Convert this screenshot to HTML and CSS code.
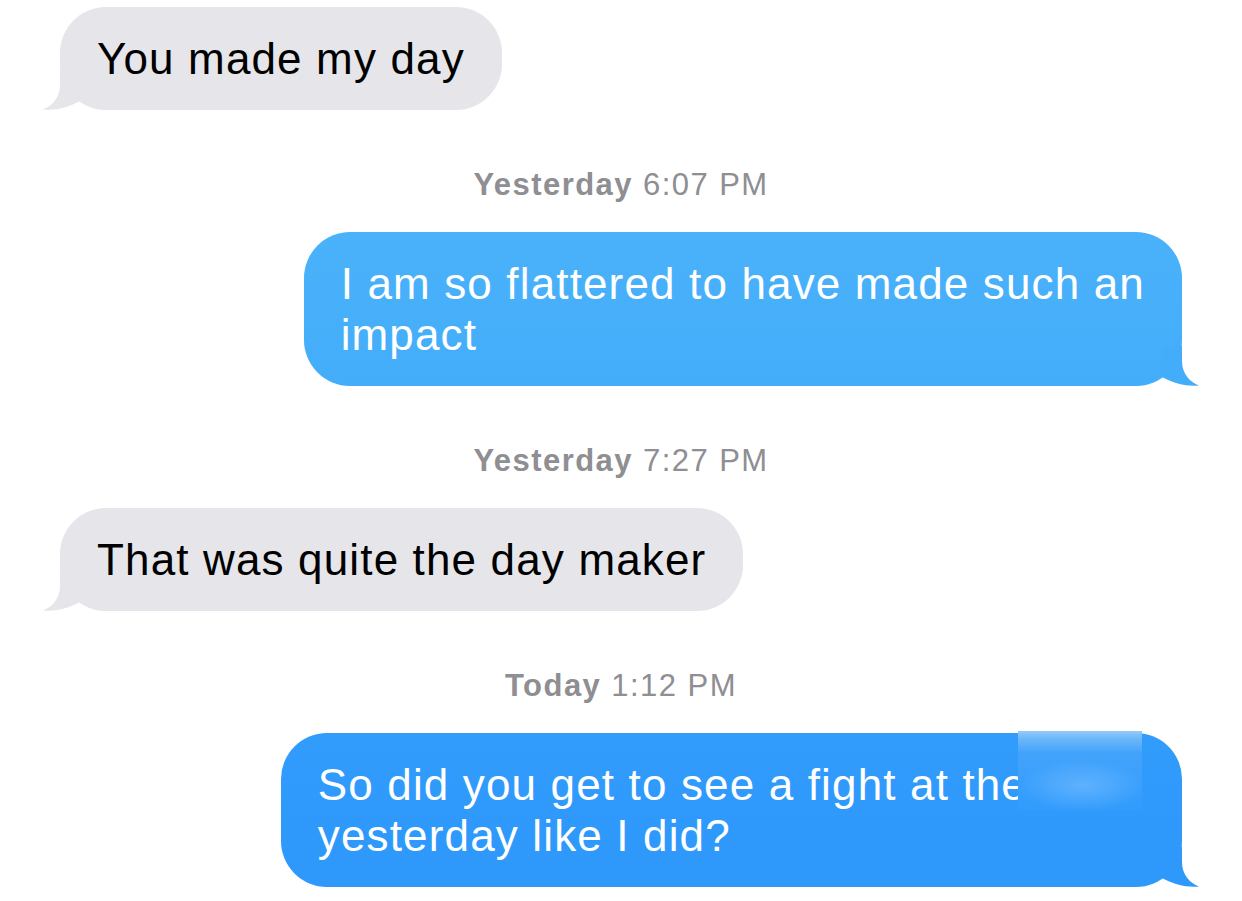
FILE: index.html
```html
<!DOCTYPE html>
<html lang="en">
<head>
<meta charset="utf-8">
<title>Messages</title>
<link rel="stylesheet" href="styles.css">
</head>
<body>
<main class="thread">
  <div class="bubble them">You made my day<svg class="tail tail-left" viewBox="0 0 50 40" width="50" height="40"><path d="M20 0 L20 15 C20 28 12 36 3 39.5 C16 40.5 28 37.5 40 31 L40 0 Z"/></svg></div>

  <div class="stamp"><b>Yesterday</b> 6:07 PM</div>

  <div class="bubble me light">I am so flattered to have made such an<br>impact<svg class="tail tail-right" viewBox="0 0 50 40" width="50" height="40"><path d="M30 0 L30 15 C30 28 38 36 47 39.5 C34 40.5 22 37.5 10 31 L10 0 Z"/></svg></div>

  <div class="stamp"><b>Yesterday</b> 7:27 PM</div>

  <div class="bubble them">That was quite the day maker<svg class="tail tail-left" viewBox="0 0 50 40" width="50" height="40"><path d="M20 0 L20 15 C20 28 12 36 3 39.5 C16 40.5 28 37.5 40 31 L40 0 Z"/></svg></div>

  <div class="stamp"><b>Today</b> 1:12 PM</div>

  <div class="bubble me deep">So did you get to see a fight at the<span class="gap"></span><br>yesterday like I did?<div class="redact"></div><svg class="tail tail-right" viewBox="0 0 50 40" width="50" height="40"><path d="M30 0 L30 15 C30 28 38 36 47 39.5 C34 40.5 22 37.5 10 31 L10 0 Z"/></svg></div>
</main>
</body>
</html>
```
FILE: styles.css
```css
html, body {
  margin: 0;
  padding: 0;
  background: #ffffff;
}

body {
  width: 1242px;
  height: 901px;
  overflow: hidden;
  font-family: "Liberation Sans", Arial, sans-serif;
}

.thread {
  display: flex;
  flex-direction: column;
  padding: 7px 60px 0 60px;
}

.bubble {
  position: relative;
  font-size: 44px;
  line-height: 51px;
  letter-spacing: 1.15px;
  padding: 26px 37px 26px 37px;
  border-radius: 46px;
  white-space: nowrap;
}

.them {
  align-self: flex-start;
  background: #e5e5ea;
  color: #000000;
}

.them .tail { fill: #e5e5ea; }

.me {
  align-self: flex-end;
  color: #ffffff;
}

.light { background: linear-gradient(to bottom, #4ab2fa, #44adfa); }
.light .tail { fill: #44adfa; }

.deep { background: linear-gradient(to bottom, #319cfc, #2e98fb); }
.deep .tail { fill: #2e98fb; }

.tail {
  position: absolute;
  bottom: 0;
  display: block;
}

.tail-left { left: -20px; }
.tail-right { right: -20px; }

.stamp {
  align-self: center;
  font-size: 31px;
  line-height: 30px;
  letter-spacing: 1.45px;
  color: #8e8e93;
  margin: 60px 0 32px 0;
}

.stamp b {
  font-weight: 700;
}

.gap {
  display: inline-block;
  width: 118px;
}

.redact {
  position: absolute;
  top: -2px;
  right: 40px;
  width: 124px;
  height: 80px;
  background:
    radial-gradient(ellipse 62px 26px at 52% 68%, rgba(120, 190, 255, 0.6), rgba(120, 190, 255, 0)),
    linear-gradient(to bottom, #94cbf9 0px, #6ab6fa 8px, #42a3fb 22px, #3a9ffc 50px, #319cfc 80px);
}
```
